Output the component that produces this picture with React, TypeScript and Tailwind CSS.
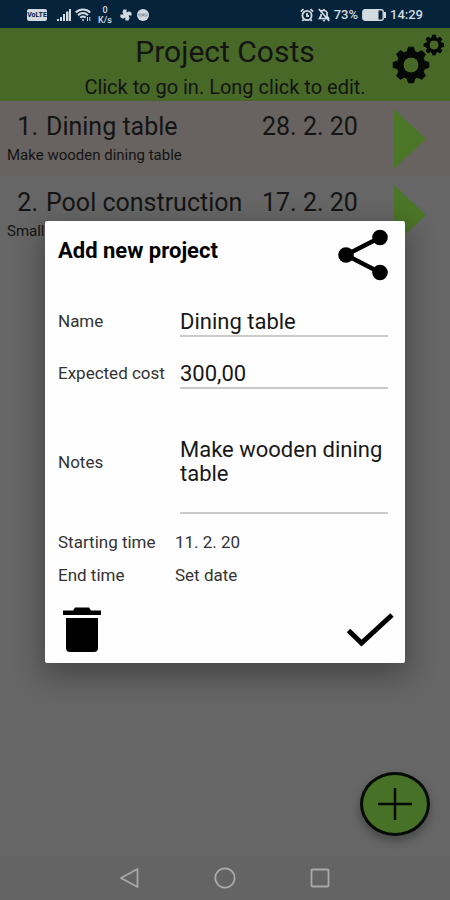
import type { ReactNode } from "react";

type Project = { id: number; name: string; date: string; note: string; tone: string };

const projects: Project[] = [
  { id: 1, name: "Dining table", date: "28. 2. 20", note: "Make wooden dining table", tone: "bg-[#686360]" },
  { id: 2, name: "Pool construction", date: "17. 2. 20", note: "Small pool", tone: "bg-[#666666]" },
];

function gearPath(cx: number, cy: number, outer: number, inner: number, hole: number) {
  const points: string[] = [];
  for (let i = 0; i < 8; i++) {
    const base = (i * Math.PI) / 4;
    const corners: [number, number][] = [
      [-0.28, inner],
      [-0.14, outer],
      [0.14, outer],
      [0.28, inner],
    ];
    for (const [offset, r] of corners) {
      points.push(`${(cx + r * Math.sin(base + offset)).toFixed(2)} ${(cy - r * Math.cos(base + offset)).toFixed(2)}`);
    }
  }
  return `M${points.join("L")}Z M${cx - hole} ${cy}a${hole} ${hole} 0 1 0 ${hole * 2} 0a${hole} ${hole} 0 1 0 ${-hole * 2} 0Z`;
}

function StatusBar() {
  return (
    <div className="flex h-7 shrink-0 items-center justify-between bg-[#06233c] px-[27px] pt-0.5 text-[#d3dae0]">
      <div className="flex items-center">
        <span className="flex h-3 w-5 items-center justify-center rounded-xs bg-[#d3dae0] text-[7px] font-bold text-[#06233c]">
          VoLTE
        </span>
        <svg className="ml-2.5 h-3 w-3.5" viewBox="0 0 14 12" fill="currentColor" aria-hidden="true">
          <path d="M0 10h2v2H0zM3 8h2v4H3zM6 5h2v7H6zM9 2.500h2.500V12H9zM12 0h2v12h-2z" />
        </svg>
        <svg className="ml-1 h-3.5 w-4" viewBox="0 0 16 14" fill="none" stroke="currentColor" strokeWidth="2" aria-hidden="true">
          <path d="M.8 4.500c4-4 10.400-4 14.400 0M3 7.200c3-2.800 7-2.800 10 0M5.300 9.700c1.700-1.500 3.700-1.500 5.400 0" />
          <circle cx="8" cy="12" r="1" fill="currentColor" stroke="none" />
          <path d="M12.500 9v4M14.800 9v4" strokeWidth="1" />
        </svg>
        <span className="ml-1.5 flex w-4 flex-col items-center text-[9px] leading-[10px] font-medium">
          <span>0</span>
          <span>K/s</span>
        </span>
        <svg className="ml-[7px] h-3 w-3" viewBox="0 0 12 12" fill="currentColor" aria-hidden="true">
          <path d="M6 6V1H4L3 3l1 2ZM6 6h5V4L9 3 7 4ZM6 6v5h2l1-2-1-2ZM6 6H1v2l2 1 2-1Z" stroke="currentColor" strokeWidth="1.2" />
        </svg>
        <svg className="ml-[5px] h-3 w-3" viewBox="0 0 12 12" aria-hidden="true">
          <circle cx="6" cy="6" r="6" fill="currentColor" />
          <path d="M2 5h3.500v2H2zM6.500 5H10v2H6.500z" fill="none" stroke="#8b98a4" />
        </svg>
      </div>
      <div className="flex items-center text-[13px] font-medium">
        <svg className="h-3.5 w-3.5" viewBox="0 0 14 14" fill="none" stroke="currentColor" strokeWidth="1.8" aria-hidden="true">
          <circle cx="7" cy="7.500" r="4.600" />
          <path d="M7 5v3h2M.8 3.600 3.500 1.200M13.200 3.600 10.500 1.200M3.500 11.500 2.400 13M10.500 11.500l1.100 1.500" />
        </svg>
        <svg className="mr-1 ml-1 h-3.5 w-3" viewBox="0 0 12 14" fill="none" stroke="currentColor" strokeWidth="1.700" aria-hidden="true">
          <path d="M3 3.500C4 2 8 2 9 4.500V8l1.500 2.500H1.500L3 8V6M6 1v1.500M4.800 12.500h2.400M.8 1l10.400 12" />
        </svg>
        <span>73%</span>
        <svg className="mr-1 ml-1 h-3 w-6" viewBox="0 0 24 12" fill="none" aria-hidden="true">
          <rect x=".8" y=".8" width="20.400" height="10.400" rx="2" stroke="currentColor" strokeWidth="1.400" />
          <path d="M1 1h15.500v10H1z" fill="currentColor" />
          <path d="M22 3h2v6h-2z" fill="currentColor" />
        </svg>
        <span>14:29</span>
      </div>
    </div>
  );
}

function ProjectRow({ project }: { project: Project }) {
  return (
    <li className={`flex h-19 items-start ${project.tone}`}>
      <a href={`#project-${project.id}`} className="flex min-w-0 flex-1 flex-col pt-3">
        <span className="flex text-[25px] leading-7">
          <span className="w-[46px] pr-2 text-right">{project.id}.</span>
          <span className="flex-1">{project.name}</span>
          <span className="w-[132px]">{project.date}</span>
        </span>
        <span className="pl-[7px] text-[15px] leading-7">{project.note}</span>
      </a>
      <button type="button" aria-label={`Open ${project.name}`} className="mt-2 mr-6">
        <svg className="h-[60px] w-8" viewBox="0 0 32 60" fill="#4b7627">
          <path d="M0 0 32 30 0 60Z" />
        </svg>
      </button>
    </li>
  );
}

function Field({ id, label, children }: { id: string; label: string; children: ReactNode }) {
  return (
    <div className="flex items-center">
      <label htmlFor={id} className="w-[122px] shrink-0 text-[17px] leading-6 text-[#333333]">
        {label}
      </label>
      {children}
    </div>
  );
}

function DateRow({ id, label, value }: { id: string; label: string; value: string }) {
  return (
    <div className="flex h-[33px] items-center text-[17px] leading-6 text-[#333333]">
      <label htmlFor={id} className="w-[117px] shrink-0">
        {label}
      </label>
      <button id={id} type="button">
        {value}
      </button>
    </div>
  );
}

function ProjectDialog() {
  const box = "w-full min-w-0 rounded-none border-b-2 border-[#cacaca] bg-transparent text-[22px] text-[#181818] outline-none";
  return (
    <form
      role="dialog"
      aria-labelledby="dialog-title"
      className="w-4/5 rounded-xs bg-[#fefefe] pt-2 pr-[17px] pb-2.5 pl-[13px] text-black shadow-[0_10px_28px_4px_rgba(0,0,0,0.3)]"
    >
      <div className="flex items-start justify-between">
        <h2 id="dialog-title" className="pt-2 text-[22px] leading-7 font-bold">
          Add new project
        </h2>
        <button type="button" aria-label="Share">
          <svg className="h-[52px] w-[50px]" viewBox="0 0 50 52">
            <path d="M42 8.500 8 26l34 17.500" fill="none" stroke="#000" strokeWidth="4.500" />
            <circle cx="42" cy="8.500" r="7.800" />
            <circle cx="8" cy="26" r="7.800" />
            <circle cx="42" cy="43.500" r="7.800" />
          </svg>
        </button>
      </div>
      <div className="mt-6 flex flex-col">
        <Field id="name" label="Name">
          <input id="name" type="text" defaultValue="Dining table" className={`${box} h-8 pt-0.5`} />
        </Field>
        <div className="mt-5">
          <Field id="cost" label="Expected cost">
            <input id="cost" type="text" inputMode="decimal" defaultValue="300,00" className={`${box} h-8 pt-0.5`} />
          </Field>
        </div>
        <div className="mt-5">
          <Field id="notes" label="Notes">
            <textarea
              id="notes"
              defaultValue="Make wooden dining table"
              className={`${box} block h-[105px] resize-none overflow-hidden pt-[29px] leading-6`}
            />
          </Field>
        </div>
      </div>
      <div className="mt-[11px]">
        <DateRow id="start" label="Starting time" value="11. 2. 20" />
        <DateRow id="end" label="End time" value="Set date" />
      </div>
      <div className="mt-4 flex items-center justify-between">
        <button type="button" aria-label="Delete project" className="ml-1">
          <svg className="h-[46px] w-10" viewBox="0 0 40 46">
            <path d="M1 3.500h10L13 .5h14l2 3h10V8H1ZM4 11h32v30q0 4-4 4H8q-4 0-4-4Z" />
          </svg>
        </button>
        <button type="submit" aria-label="Save project" className="-mr-1.5">
          <svg className="h-9 w-12" viewBox="0 0 48 36" fill="none" stroke="#000" strokeWidth="5">
            <path d="m2.500 18.500 13 12.500L46 3" />
          </svg>
        </button>
      </div>
    </form>
  );
}

function NavBar() {
  return (
    <nav className="flex h-11 shrink-0 items-center justify-center gap-[73px] bg-[#646464] text-[#a9a9a9]">
      <button type="button" aria-label="Back">
        <svg className="h-[22px] w-[22px]" viewBox="0 0 22 22" fill="none" stroke="currentColor" strokeWidth="1.800" strokeLinejoin="round">
          <path d="M18.500 2v18L2 11Z" />
        </svg>
      </button>
      <button type="button" aria-label="Home">
        <svg className="h-[22px] w-[22px]" viewBox="0 0 22 22" fill="none" stroke="currentColor" strokeWidth="1.800">
          <circle cx="11" cy="11" r="9.700" />
        </svg>
      </button>
      <button type="button" aria-label="Recent apps">
        <svg className="h-[22px] w-[22px]" viewBox="0 0 22 22" fill="none" stroke="currentColor" strokeWidth="1.800">
          <rect x="2.500" y="2.500" width="17" height="17" rx="1" />
        </svg>
      </button>
    </nav>
  );
}

export default function App() {
  return (
    <div className="flex min-h-screen flex-col bg-[#666666] font-[Roboto,sans-serif] text-[#141414]">
      <StatusBar />
      <div className="relative flex flex-1 flex-col">
        <header className="relative bg-[#476827] pt-1 text-center">
          <h1 className="text-[30px] leading-10">Project Costs</h1>
          <p className="pt-0.5 pb-px text-xl leading-[26px]">Click to go in. Long click to edit.</p>
          <button type="button" aria-label="Settings" className="absolute top-1.5 right-1.5">
            <svg className="h-[50px] w-[54px]" viewBox="0 0 54 50" fill="#050805" fillRule="evenodd">
              <path d={gearPath(21, 31, 18, 14, 8)} stroke="#050805" strokeLinejoin="round" />
              <path d={gearPath(44, 11, 10, 7.5, 5)} stroke="#050805" strokeLinejoin="round" />
            </svg>
          </button>
        </header>
        <ul>
          {projects.map((project) => (
            <ProjectRow key={project.id} project={project} />
          ))}
        </ul>
        <button
          type="button"
          aria-label="Add project"
          className="absolute right-5 bottom-5 flex h-16 w-[70px] items-center justify-center rounded-[50%] border-3 border-[#060a04] bg-[#467126] shadow-[0_5px_10px_rgba(0,0,0,0.3)]"
        >
          <svg className="h-8 w-[34px]" viewBox="0 0 34 32" stroke="#060a04" strokeWidth="2.500">
            <path d="M17 0v32M0 16h34" />
          </svg>
        </button>
        <div className="absolute inset-0 flex items-center justify-center">
          <ProjectDialog />
        </div>
      </div>
      <NavBar />
    </div>
  );
}
